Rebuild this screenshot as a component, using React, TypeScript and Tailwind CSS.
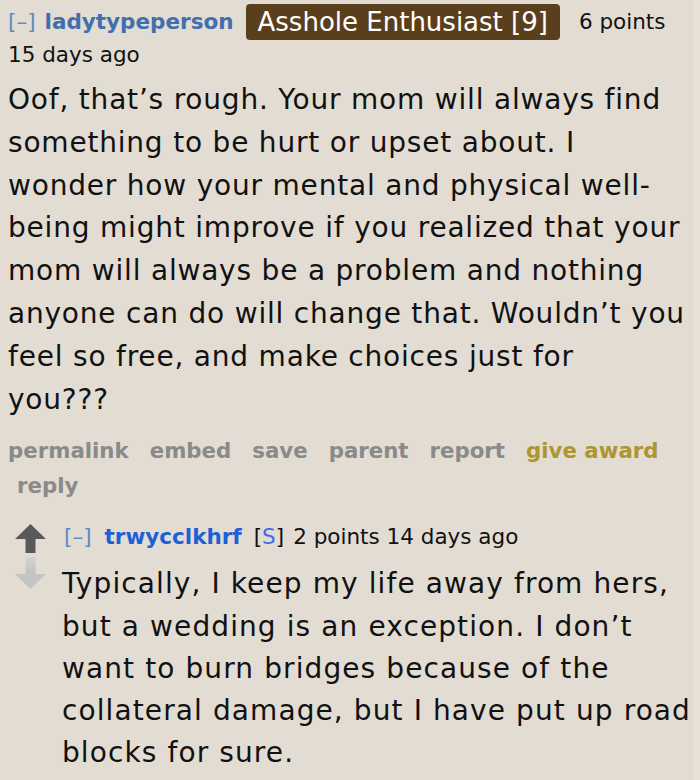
const bodyLines = [
  "Oof, that’s rough. Your mom will always find",
  "something to be hurt or upset about. I",
  "wonder how your mental and physical well-",
  "being might improve if you realized that your",
  "mom will always be a problem and nothing",
  "anyone can do will change that. Wouldn’t you",
  "feel so free, and make choices just for",
  "you???",
];

export default function App() {
  const font = { fontFamily: '"DejaVu Sans", Verdana, sans-serif' };
  return (
    <div className="w-[700px] h-[780px] bg-[#e2dcd3] overflow-hidden relative" style={font}>
      <div className="absolute top-0 right-0 w-[7px] h-full bg-[#e6e1d9]"></div>
      <div className="pl-[8px] pt-[4px] pr-[6px]">
        {/* header */}
        <div className="flex items-center h-[36px] text-[21.5px] whitespace-nowrap">
          <span className="text-[#5f8cc4]">[–]</span>
          <span className="ml-[9px] font-bold text-[#3f6fad]">ladytypeperson</span>
          <span className="ml-[12px] bg-[#5a3f1c] text-white rounded-[4px] px-[12px] h-[36px] flex items-center text-[26px]">
            Asshole Enthusiast [9]
          </span>
          <span className="ml-[19px] text-[#111]">6 points</span>
        </div>
        <div className="text-[21.5px] text-[#111] leading-[30px]">15 days ago</div>

        {/* body */}
        <p className="mt-[9px] text-[28px] leading-[42.8px] text-[#111] tracking-[0.8px] whitespace-nowrap">
          {bodyLines.map((l, i) => (
            <span key={i} className="block">{l}</span>
          ))}
        </p>

        {/* actions */}
        <div className="mt-[12px] flex flex-wrap text-[21.3px] font-bold text-[#8a8a8a] leading-[35px]">
          <span className="mr-[21px]">permalink</span>
          <span className="mr-[21px]">embed</span>
          <span className="mr-[21px]">save</span>
          <span className="mr-[21px]">parent</span>
          <span className="mr-[21px]">report</span>
          <span className="text-[#ab9630]">give award</span>
        </div>
        <div className="pl-[9px] text-[21.3px] font-bold text-[#8a8a8a] leading-[35px]">reply</div>

        {/* child */}
        <div className="mt-[16px] flex">
          <div className="w-[54px] flex flex-col items-start pl-[7px] pt-[5px] gap-[4px]">
            <svg width="31" height="29" viewBox="0 0 31 29">
              <path d="M15.5 0 L31 15 L20.5 15 L20.5 29 L10.5 29 L10.5 15 L0 15 Z" fill="#595959" />
            </svg>
            <svg width="31" height="32" viewBox="0 0 31 32">
              <defs>
                <linearGradient id="dn" x1="0" y1="0" x2="0" y2="1">
                  <stop offset="0" stopColor="#d6d3cf" />
                  <stop offset="0.45" stopColor="#c4c4c4" />
                  <stop offset="1" stopColor="#c4c4c4" />
                </linearGradient>
              </defs>
              <path d="M15.5 32 L31 17 L20.5 17 L20.5 0 L10.5 0 L10.5 17 L0 17 Z" fill="url(#dn)" />
            </svg>
          </div>
          <div className="flex-1">
            <div className="flex items-center h-[36px] text-[21.5px] text-[#111] whitespace-nowrap">
              <span className="ml-[2px] text-[#5f8cc4]">[–]</span>
              <span className="ml-[13px] font-bold text-[#1d5fd6]">trwycclkhrf</span>
              <span className="ml-[12px]">[<span className="text-[#3d6fe0]">S</span>]</span>
              <span className="ml-[9px]">2 points 14 days ago</span>
            </div>
            <p className="mt-[8px] text-[28px] leading-[42.2px] text-[#111] tracking-[1.1px]">
              Typically, I keep my life away from hers, but a wedding is an exception. I don’t want to burn bridges because of the collateral damage, but I have put up road blocks for sure.
            </p>
          </div>
        </div>
      </div>
    </div>
  );
}
